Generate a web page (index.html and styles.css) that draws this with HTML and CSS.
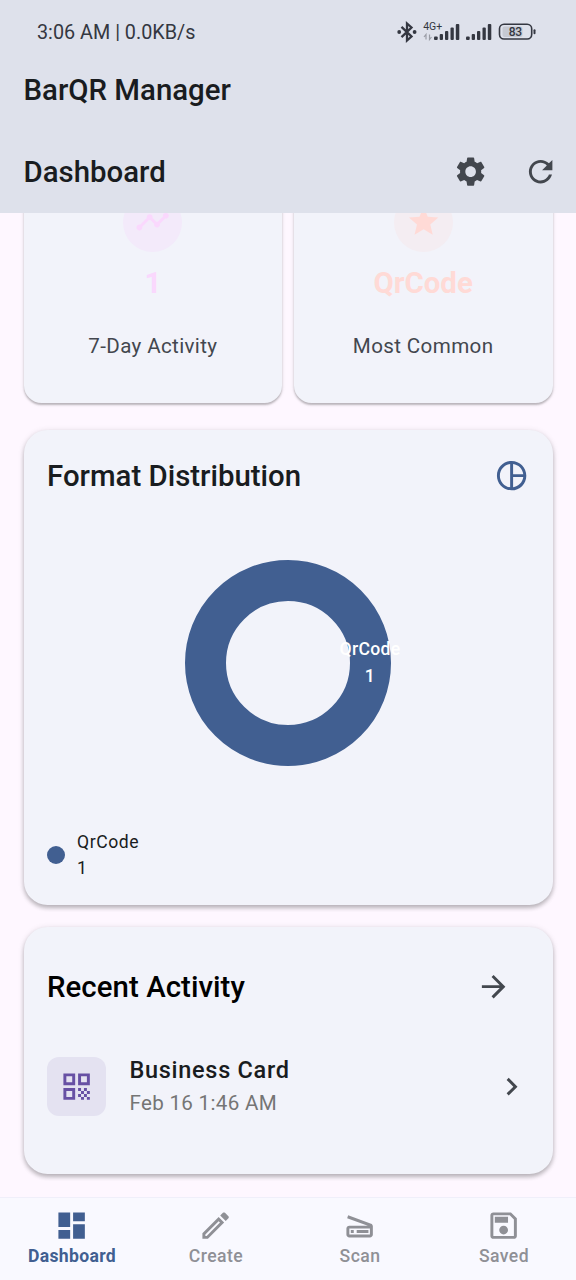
FILE: index.html
```html
<!DOCTYPE html>
<html lang="en">
<head>
<meta charset="utf-8">
<title>BarQR Manager</title>
<link rel="stylesheet" href="styles.css">
</head>
<body>
<div class="app">
  <header class="top">
    <div class="status">
      <span class="clock">3:06 AM | 0.0KB/s</span>
      <svg class="status-icons" width="140" height="24" viewBox="0 0 140 24">
        <path d="M5.500 6.800l10 9.700-4.500 4V3.500l4.500 4-10 9.700" fill="none" stroke="#343741" stroke-width="2.300"/>
        <circle cx="3.200" cy="12" r="1.900" fill="#343741"/>
        <circle cx="18.600" cy="12" r="1.900" fill="#343741"/>
        <text class="net" x="27.200" y="10" textLength="19">4G+</text>
        <path d="M30 19.500v-5l-2 2.500M33.500 14.500v5l2-2.500" fill="none" stroke="#9a9da6" stroke-width="1.200"/>
        <g fill="#343741">
          <rect x="38" y="16.500" width="3.700" height="3.500" rx="1"/>
          <rect x="43.700" y="14" width="3.300" height="6" rx="1"/>
          <rect x="49" y="11" width="3.300" height="9" rx="1"/>
          <rect x="54.500" y="7.500" width="3.300" height="12.500" rx="1"/>
          <rect x="59.800" y="4" width="3.500" height="16" rx="1"/>
          <rect x="70" y="16.500" width="3.700" height="3.500" rx="1"/>
          <rect x="75.700" y="14" width="3.300" height="6" rx="1"/>
          <rect x="81" y="11" width="3.300" height="9" rx="1"/>
          <rect x="86.500" y="7.500" width="3.300" height="12.500" rx="1"/>
          <rect x="91.800" y="4" width="3.500" height="16" rx="1"/>
          <rect x="137.500" y="9.300" width="2" height="5" rx="1"/>
        </g>
        <rect x="106.500" y="6.500" width="20" height="10.500" rx="2" fill="#c6c9d2"/>
        <rect x="103.500" y="4.200" width="32.200" height="14.800" rx="4.500" fill="none" stroke="#343741" stroke-width="1.600"/>
        <text class="battery" x="112.700" y="16" textLength="13.500">83</text>
      </svg>
    </div>
    <h1 class="heading app-title">BarQR Manager</h1>
    <div class="toolbar">
      <h2 class="heading">Dashboard</h2>
      <svg class="icon" viewBox="0 0 24 24"><path d="M19.140 12.940c.04-.3.06-.61.06-.94 0-.32-.02-.64-.07-.94l2.030-1.580c.18-.14.23-.41.12-.61l-1.920-3.320c-.12-.22-.37-.29-.59-.22l-2.390.96c-.5-.38-1.030-.7-1.620-.94l-.36-2.540c-.04-.24-.24-.41-.48-.41h-3.840c-.24 0-.43.17-.47.41l-.36 2.540c-.59.24-1.130.57-1.620.94l-2.390-.96c-.22-.08-.47 0-.59.22L2.740 8.870c-.12.21-.08.47.12.61l2.030 1.580c-.05.3-.09.63-.09.94s.02.64.07.94l-2.030 1.580c-.18.14-.23.41-.12.61l1.920 3.320c.12.22.37.29.59.22l2.390-.96c.5.38 1.030.7 1.620.94l.36 2.540c.05.24.24.41.48.41h3.840c.24 0 .44-.17.47-.41l.36-2.540c.59-.24 1.130-.56 1.620-.94l2.390.96c.22.08.47 0 .59-.22l1.920-3.320c.12-.22.07-.47-.12-.61l-2.010-1.580zM12 15.600c-1.980 0-3.600-1.620-3.600-3.600s1.620-3.600 3.600-3.600 3.600 1.620 3.600 3.600-1.620 3.600-3.600 3.600z"/></svg>
      <svg class="icon" viewBox="0 0 24 24"><path d="M17.650 6.350C16.200 4.900 14.210 4 12 4c-4.420 0-7.990 3.580-7.990 8s3.570 8 7.990 8c3.730 0 6.840-2.550 7.730-6h-2.080c-.82 2.330-3.040 4-5.650 4-3.310 0-6-2.690-6-6s2.690-6 6-6c1.660 0 3.140.69 4.220 1.780L13 11h7V4l-2.350 2.350z"/></svg>
    </div>
  </header>

  <main class="content">
    <section class="stats">
      <article class="card stat pink">
        <div class="badge"><svg class="icon" viewBox="0 0 24 24"><path d="M23 8c0 1.100-.9 2-2 2-.18 0-.35-.02-.51-.07l-3.560 3.550c.05.16.07.34.07.52 0 1.100-.9 2-2 2s-2-.9-2-2c0-.18.02-.36.07-.52l-2.550-2.550c-.16.05-.34.07-.52.07s-.36-.02-.52-.07l-4.550 4.560c.05.16.07.33.07.51 0 1.100-.9 2-2 2s-2-.9-2-2 .9-2 2-2c.18 0 .35.02.51.07l4.560-4.550C8.020 9.360 8 9.180 8 9c0-1.100.9-2 2-2s2 .9 2 2c0 .18-.02.36-.07.52l2.550 2.550c.16-.05.34-.07.52-.07s.36.02.52.07l3.550-3.560C19.020 8.350 19 8.180 19 8c0-1.100.9-2 2-2s2 .9 2 2z"/></svg></div>
        <div class="value">1</div>
        <div class="label">7-Day Activity</div>
      </article>
      <article class="card stat coral">
        <div class="badge"><svg class="icon" viewBox="0 0 24 24"><path d="M12 17.270L18.180 21l-1.640-7.030L22 9.240l-7.190-.61L12 2 9.190 8.630 2 9.240l5.460 4.730L5.820 21z"/></svg></div>
        <div class="value">QrCode</div>
        <div class="label">Most Common</div>
      </article>
    </section>

    <section class="card panel format">
      <div class="panel-head">
        <h2 class="heading">Format Distribution</h2>
        <svg class="icon blue" viewBox="0 0 24 24"><path d="M12 2C6.480 2 2 6.480 2 12s4.480 10 10 10 10-4.480 10-10S17.520 2 12 2zm1 2.070c3.610.45 6.480 3.330 6.930 6.930H13V4.070zM4 12c0-4.060 3.070-7.440 7-7.930v15.870c-3.930-.5-7-3.880-7-7.940zm9 7.930V13h6.930c-.45 3.610-3.320 6.480-6.930 6.930z"/></svg>
      </div>
      <div class="donut"><div class="donut-label">QrCode<br>1</div></div>
      <div class="legend"><i class="dot"></i><div class="legend-text">QrCode<br>1</div></div>
    </section>

    <section class="card panel recent">
      <div class="panel-head">
        <h2 class="heading">Recent Activity</h2>
        <svg class="icon" viewBox="0 0 24 24"><path d="M12 4l-1.410 1.410L16.170 11H4v2h12.170l-5.580 5.590L12 20l8-8z"/></svg>
      </div>
      <div class="item">
        <div class="tile"><svg class="icon" viewBox="0 0 24 24"><path d="M3 11h8V3H3v8zm2-6h4v4H5V5zM3 21h8v-8H3v8zm2-6h4v4H5v-4zM13 3v8h8V3h-8zm6 6h-4V5h4v4zM19 19h2v2h-2zM13 13h2v2h-2zM15 15h2v2h-2zM13 17h2v2h-2zM15 19h2v2h-2zM17 17h2v2h-2zM17 13h2v2h-2zM19 15h2v2h-2z"/></svg></div>
        <div class="item-text">
          <div class="item-title">Business Card</div>
          <div class="item-date">Feb 16 1:46 AM</div>
        </div>
        <svg class="icon" viewBox="0 0 24 24"><path d="M10 6L8.590 7.410 13.170 12l-4.580 4.590L10 18l6-6z"/></svg>
      </div>
    </section>
  </main>

  <nav class="nav">
    <div class="tab active"><svg class="icon" viewBox="0 0 24 24"><path d="M3 13h8V3H3v10zm0 8h8v-6H3v6zm10 0h8V11h-8v10zm0-18v6h8V3h-8z"/></svg><span>Dashboard</span></div>
    <div class="tab"><svg class="icon" viewBox="0 0 24 24"><path d="M14.060 9.020l.92.92L5.920 19H5v-.92l9.060-9.060M17.660 3c-.25 0-.51.1-.7.29l-1.830 1.830 3.750 3.750 1.830-1.830c.39-.39.39-1.020 0-1.410l-2.340-2.340c-.2-.2-.45-.29-.71-.29zm-3.600 3.190L3 17.250V21h3.750L17.810 9.940l-3.750-3.750z"/></svg><span>Create</span></div>
    <div class="tab"><svg class="icon" viewBox="0 0 24 24"><path d="M19.800 10.700L4.200 5l-.7 1.900L17.600 12H5c-1.100 0-2 .9-2 2v4c0 1.100.9 2 2 2h14c1.100 0 2-.9 2-2v-5.500c0-.8-.5-1.600-1.200-1.800zM19 18H5v-4h14v4zM6 15h2v2H6zm4 0h8v2h-8z"/></svg><span>Scan</span></div>
    <div class="tab"><svg class="icon" viewBox="0 0 24 24"><path d="M17 3H5c-1.110 0-2 .9-2 2v14c0 1.100.89 2 2 2h14c1.100 0 2-.9 2-2V7l-4-4zm2 16H5V5h11.170L19 7.830V19zm-7-7c-1.660 0-3 1.340-3 3s1.340 3 3 3 3-1.340 3-3-1.340-3-3-3zM6 6h9v4H6z"/></svg><span>Saved</span></div>
  </nav>
</div>
</body>
</html>
```
FILE: styles.css
```css
* { box-sizing: border-box; }
body { margin: 0; font-family: Roboto, sans-serif; color: #191c20; background: #fef7ff; }
.app { width: 576px; height: 1280px; display: flex; flex-direction: column; overflow: hidden; white-space: nowrap; }
.icon { width: 35.25px; height: 35.25px; flex: none; display: block; fill: #43474e; }
.heading { margin: 0; font-size: 29.4px; line-height: 36px; font-weight: 500; }

.top { height: 213px; background: #dee1eb; flex: none; }
.status { height: 64px; padding: 0 40px 0 37px; display: flex; align-items: center; justify-content: space-between; }
.clock { font-size: 19.8px; color: #343741; }
.status-icons { display: block; }
.net { font-size: 10.5px; fill: #343741; }
.battery { font-size: 12px; font-weight: 500; fill: #343741; }
.app-title { padding: 8px 23.5px; }
.toolbar { height: 82px; margin-top: 15px; padding: 0 17.5px 0 23.5px; display: flex; align-items: center; gap: 35.25px; }
.toolbar .heading { flex: 1; }

.content { flex: 1; min-height: 0; overflow: hidden; padding: 0 23.5px 23px; display: flex; flex-direction: column; justify-content: flex-end; }
.card { background: #f2f3fa; flex: none; }
.stats { display: grid; grid-template-columns: 1fr 1fr; gap: 11.5px; margin-bottom: 27px; flex: none; }
.stat { border-radius: 17.6px; padding: 23.5px 0 42.5px; text-align: center; box-shadow: 0 1.5px 2px rgba(0,0,0,.22), 0 1px 4px rgba(0,0,0,.1); }
.badge { width: 59px; height: 59px; border-radius: 50%; margin: 0 auto; display: flex; align-items: center; justify-content: center; }
.value { margin-top: 11.5px; font-size: 29.4px; line-height: 40px; font-weight: 700; }
.label { margin-top: 27.5px; font-size: 20.6px; line-height: 30px; letter-spacing: .36px; color: #43474e; }
.pink .badge { background: #f3eafa; }
.pink .icon { fill: #fad8fd; }
.pink .value { color: #fad8fd; }
.coral .badge { background: #f4edf2; }
.coral .icon { fill: #ffdad6; }
.coral .value { color: #ffdad6; }

.panel { border-radius: 23.5px; padding: 0 23.5px; box-shadow: 0 3px 4px rgba(0,0,0,.22), 0 1px 6px rgba(0,0,0,.12); }
.panel-head { display: flex; align-items: center; justify-content: space-between; height: 36px; }
.blue { fill: #415f91; }
.format { height: 475px; padding-top: 28px; margin-bottom: 22px; }
.donut { position: relative; width: 206px; height: 206px; margin: 66px auto 62.5px; border: 41.5px solid #415f91; border-radius: 50%; }
.donut-label { position: absolute; left: 113.5px; top: 35px; width: 61px; text-align: center; color: #fff; font-size: 17.6px; line-height: 26.5px; font-weight: 500; letter-spacing: .3px; }
.legend { display: flex; align-items: center; gap: 12px; }
.dot { width: 18px; height: 18px; border-radius: 50%; background: #415f91; }
.legend-text { font-size: 17.6px; line-height: 26px; letter-spacing: .55px; }

.recent { height: 247px; padding-top: 42px; }
.recent .heading { color: #000; letter-spacing: .05px; }
.recent .panel-head { padding-right: 18px; }
.item { display: flex; align-items: center; margin-top: 52px; height: 59px; }
.tile { width: 59px; height: 59px; border-radius: 12px; background: #e4e2f1; display: flex; align-items: center; justify-content: center; }
.tile .icon { fill: #6750a4; }
.item-text { flex: 1; padding-left: 23.5px; }
.item-title { font-size: 23.5px; line-height: 34px; font-weight: 500; letter-spacing: .7px; }
.item-date { font-size: 20.6px; line-height: 33px; letter-spacing: .3px; color: #757575; }

.nav { height: 83px; flex: none; border-top: 1px solid #f0effa; background: #f9f9ff; display: grid; grid-template-columns: repeat(4, 1fr); }
.tab { display: flex; flex-direction: column; align-items: center; padding-top: 10px; color: #8f9096; font-size: 17.6px; line-height: 27px; font-weight: 500; letter-spacing: .45px; }
.tab .icon { fill: #8f9096; }
.active { color: #415f91; font-weight: 700; letter-spacing: .3px; }
.active .icon { fill: #415f91; }
```
